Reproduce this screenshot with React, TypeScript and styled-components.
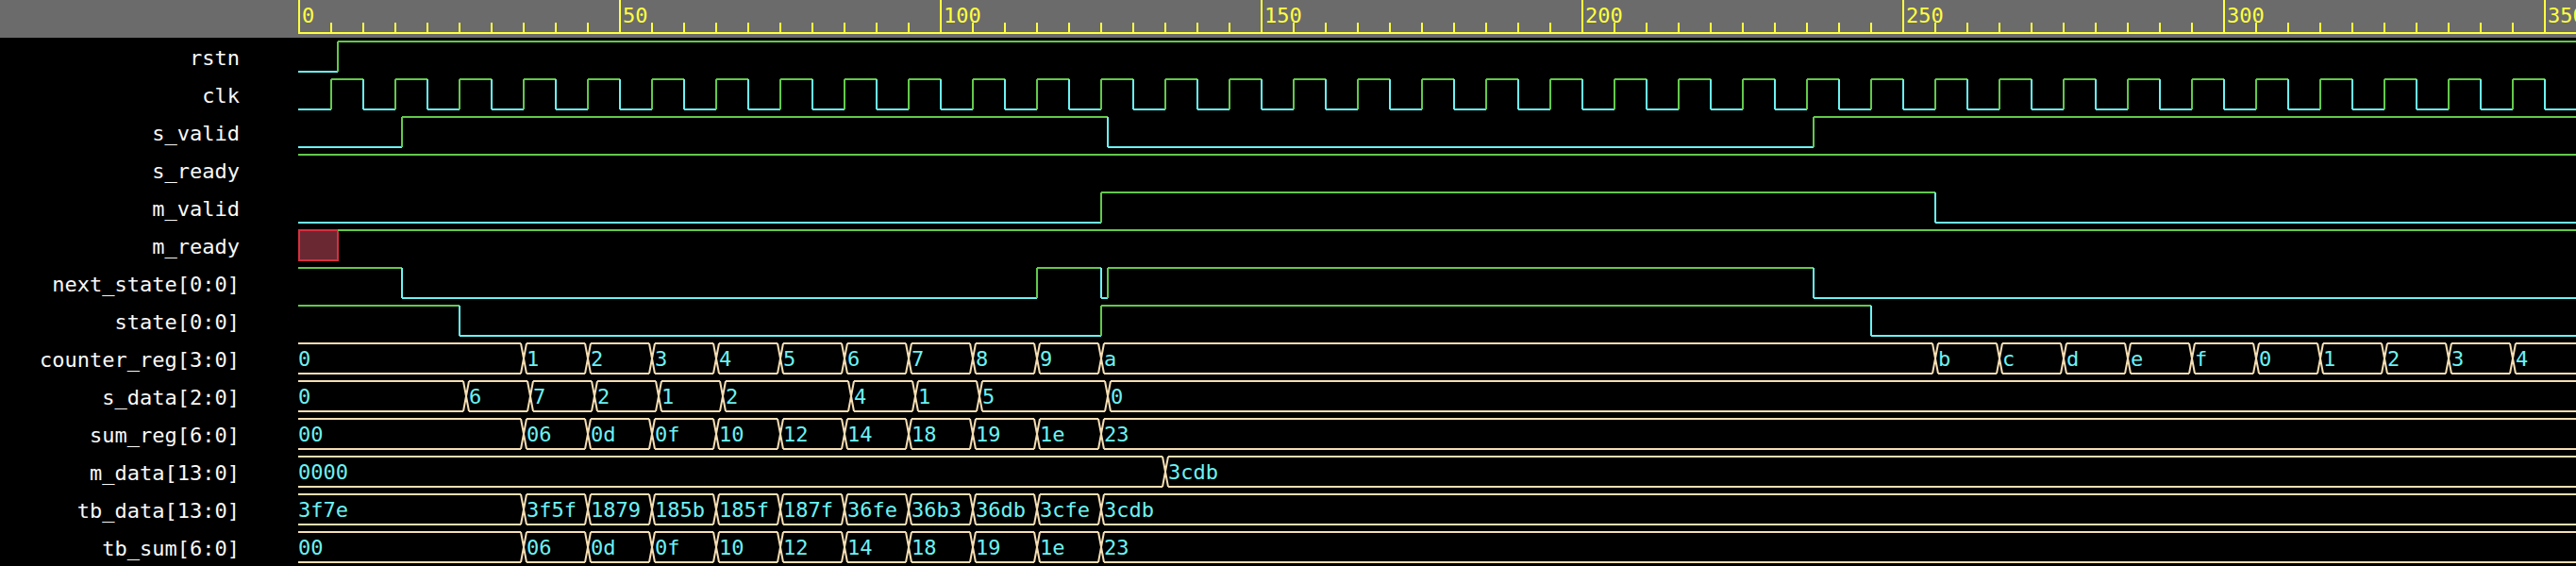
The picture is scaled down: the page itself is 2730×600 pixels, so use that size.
import React from 'react';
import styled, { createGlobalStyle } from 'styled-components';

// time -> pixel scale of the wave pane
const PX = 6.8;
const END = 360;
const WAVE_W = 2414;
const HIGH = 4;
const LOW = 36;
const MID = 20;

const colors = {
  bg: '#000000',
  header: '#6b6b6b',
  ruler: '#ffff40',
  high: '#62c94b',
  low: '#6cf2f3',
  bus: '#f5deb3',
  value: '#6cf2f3',
  xFill: '#6a2833',
  xStroke: '#d6303f',
  label: '#f8f8f8',
};

const xAt = (t: number) => Math.round(t * PX) + 1;

type BitSignal = {
  kind: 'bit';
  name: string;
  init: 0 | 1;
  edges: number[];
  unknownUntil?: number;
};

type BusSignal = {
  kind: 'bus';
  name: string;
  values: [number, string][];
};

type Signal = BitSignal | BusSignal;

const clkEdges: number[] = [];
for (let t = 5; t < END; t += 5) clkEdges.push(t);

const counterSeq = ['0', '1', '2', '3', '4', '5', '6', '7', '8', '9', 'a'];
const counterTail = ['b', 'c', 'd', 'e', 'f', '0', '1', '2', '3', '4'];
const sums = ['00', '06', '0d', '0f', '10', '12', '14', '18', '19', '1e', '23'];
const tbData = ['3f7e', '3f5f', '1879', '185b', '185f', '187f', '36fe', '36b3', '36db', '3cfe', '3cdb'];

const steps = (vals: string[], first = 35): [number, string][] =>
  vals.map((v, i) => [i === 0 ? 0 : first + (i - 1) * 10, v]);

const signals: Signal[] = [
  { kind: 'bit', name: 'rstn', init: 0, edges: [6] },
  { kind: 'bit', name: 'clk', init: 0, edges: clkEdges },
  { kind: 'bit', name: 's_valid', init: 0, edges: [16, 126, 236] },
  { kind: 'bit', name: 's_ready', init: 1, edges: [] },
  { kind: 'bit', name: 'm_valid', init: 0, edges: [125, 255] },
  { kind: 'bit', name: 'm_ready', init: 1, edges: [], unknownUntil: 6 },
  { kind: 'bit', name: 'next_state[0:0]', init: 1, edges: [16, 115, 125, 126, 236] },
  { kind: 'bit', name: 'state[0:0]', init: 1, edges: [25, 125, 245] },
  {
    kind: 'bus',
    name: 'counter_reg[3:0]',
    values: [...steps(counterSeq), ...counterTail.map((v, i): [number, string] => [255 + i * 10, v])],
  },
  {
    kind: 'bus',
    name: 's_data[2:0]',
    values: [[0, '0'], [26, '6'], [36, '7'], [46, '2'], [56, '1'], [66, '2'], [86, '4'], [96, '1'], [106, '5'], [126, '0']],
  },
  { kind: 'bus', name: 'sum_reg[6:0]', values: steps(sums) },
  { kind: 'bus', name: 'm_data[13:0]', values: [[0, '0000'], [135, '3cdb']] },
  { kind: 'bus', name: 'tb_data[13:0]', values: steps(tbData) },
  { kind: 'bus', name: 'tb_sum[6:0]', values: steps(sums) },
];

const GlobalStyle = createGlobalStyle`
  html, body {
    margin: 0;
    padding: 0;
    background: ${colors.bg};
  }
`;

const Viewer = styled.div`
  width: 2730px;
  height: 600px;
  display: grid;
  grid-template-columns: 316px 1fr;
  grid-auto-rows: 40px;
  background: ${colors.bg};
  overflow: hidden;
  font-family: 'DejaVu Sans Mono', 'Liberation Mono', monospace;
`;

const HeaderCorner = styled.div`
  background: ${colors.header};
`;

const RulerCell = styled.div`
  background: ${colors.header};
  overflow: hidden;
`;

const Label = styled.div`
  color: ${colors.label};
  font-size: 22px;
  line-height: 44px;
  height: 40px;
  text-align: right;
  padding-right: 62px;
  white-space: nowrap;
`;

const WaveCell = styled.div`
  overflow: hidden;
`;

const Svg = styled.svg`
  display: block;
  shape-rendering: crispEdges;
`;

const RulerNumber = styled.text`
  fill: ${colors.ruler};
  font-family: 'DejaVu Sans Mono', monospace;
  font-size: 22px;
`;

const Value = styled.text`
  fill: ${colors.value};
  font-family: 'DejaVu Sans Mono', monospace;
  font-size: 22px;
`;

const Ruler: React.FC = () => {
  const ticks: number[] = [];
  for (let t = 0; t < END; t += 5) ticks.push(t);
  return (
    <Svg width={WAVE_W} height={40}>
      <path d={`M0 35 H${WAVE_W}`} stroke={colors.ruler} strokeWidth={2} />
      {ticks.map((t) => {
        const x = xAt(t);
        const major = t % 50 === 0;
        return (
          <g key={t}>
            <path d={`M${x} ${major ? 0 : 24} V36`} stroke={colors.ruler} strokeWidth={2} />
            {major && (
              <RulerNumber x={x + 3} y={24}>
                {t}
              </RulerNumber>
            )}
          </g>
        );
      })}
    </Svg>
  );
};

const BitWave: React.FC<{ sig: BitSignal }> = ({ sig }) => {
  const parts: React.ReactNode[] = [];
  const start = sig.unknownUntil ?? 0;
  const bounds = [start, ...sig.edges, END];
  let level = sig.init;
  for (let i = 0; i < bounds.length - 1; i++) {
    const x0 = i === 0 && start === 0 ? 0 : xAt(bounds[i]);
    const x1 = i === bounds.length - 2 ? WAVE_W : xAt(bounds[i + 1]);
    const y = level ? HIGH : LOW;
    const color = level ? colors.high : colors.low;
    parts.push(<path key={`h${i}`} d={`M${x0} ${y} H${x1}`} stroke={color} strokeWidth={2} />);
    if (i > 0) {
      parts.push(<path key={`v${i}`} d={`M${x0} ${HIGH} V${LOW}`} stroke={color} strokeWidth={2} />);
    }
    level = level ? 0 : 1;
  }
  return (
    <Svg width={WAVE_W} height={40}>
      {sig.unknownUntil !== undefined && (
        <rect
          x={1}
          y={HIGH}
          width={xAt(sig.unknownUntil) - 1}
          height={LOW - HIGH}
          fill={colors.xFill}
          stroke={colors.xStroke}
          strokeWidth={2}
        />
      )}
      {parts}
    </Svg>
  );
};

const BusWave: React.FC<{ sig: BusSignal }> = ({ sig }) => {
  const { values } = sig;
  return (
    <Svg width={WAVE_W} height={40}>
      {values.map(([t, v], i) => {
        const next = values[i + 1];
        const x = xAt(t);
        const x0 = t === 0 ? 0 : x + 3;
        const x1 = next ? xAt(next[0]) - 3 : WAVE_W;
        let d = `M${x0} ${HIGH} H${x1} M${x0} ${LOW} H${x1}`;
        if (t > 0) {
          d += ` M${x - 3} ${HIGH} L${x} ${MID} L${x - 3} ${LOW}`;
          d += ` M${x + 3} ${HIGH} L${x} ${MID} L${x + 3} ${LOW}`;
        }
        return (
          <g key={i}>
            <path d={d} stroke={colors.bus} strokeWidth={2} fill="none" shapeRendering="auto" />
            <Value x={t === 0 ? 0 : x + 3} y={28}>
              {v}
            </Value>
          </g>
        );
      })}
    </Svg>
  );
};

const App: React.FC = () => (
  <>
    <GlobalStyle />
    <Viewer>
      <HeaderCorner />
      <RulerCell>
        <Ruler />
      </RulerCell>
      {signals.map((sig) => (
        <React.Fragment key={sig.name}>
          <Label>{sig.name}</Label>
          <WaveCell>{sig.kind === 'bit' ? <BitWave sig={sig} /> : <BusWave sig={sig} />}</WaveCell>
        </React.Fragment>
      ))}
    </Viewer>
  </>
);

export default App;
